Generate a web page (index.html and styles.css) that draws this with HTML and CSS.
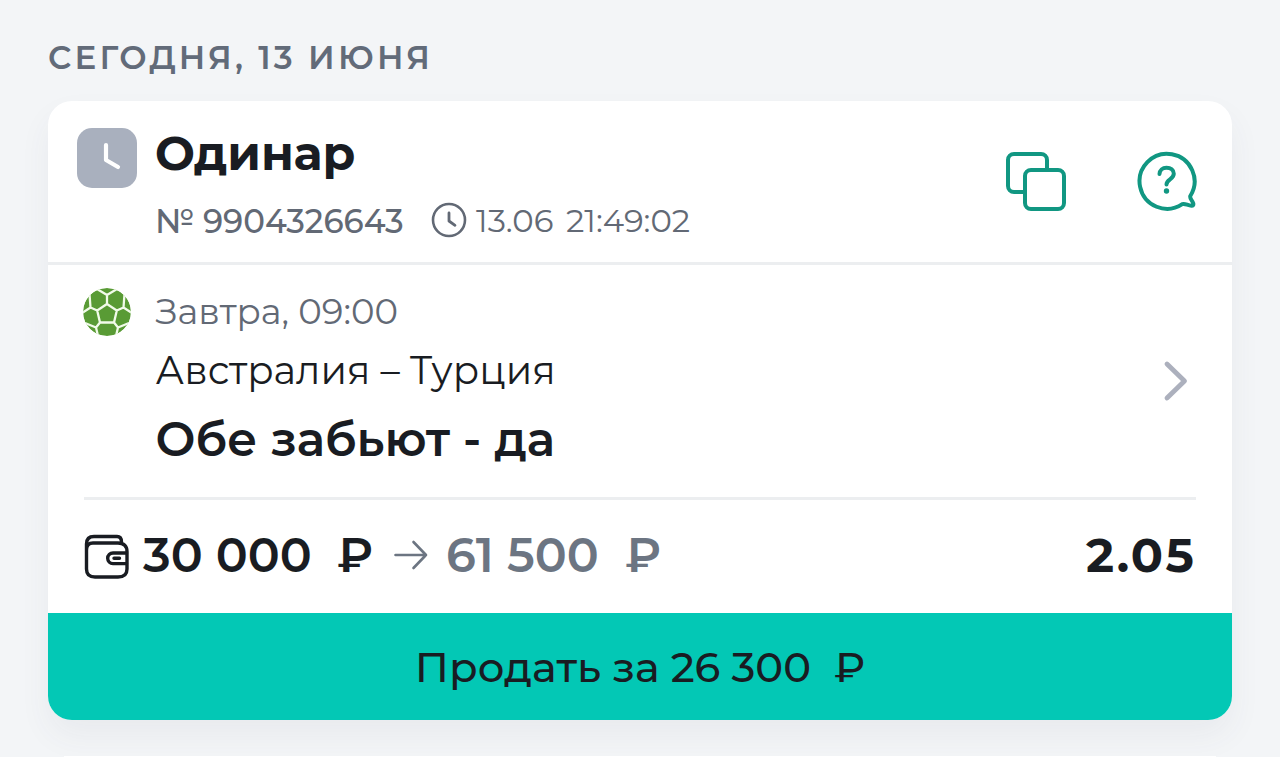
FILE: index.html
```html
<!DOCTYPE html>
<html lang="ru">
<head>
  <meta charset="UTF-8">
  <meta name="viewport" content="width=device-width, initial-scale=1.0">
  <title>История ставок</title>
  <link rel="stylesheet" href="styles.css">
</head>
<body>
  <h2 class="day-title">СЕГОДНЯ, 13 ИЮНЯ</h2>

  <div class="card">
    <div class="card-header">
      <div class="status-icon">
        <svg width="60" height="60" viewBox="0 0 60 60" fill="none" stroke="#fff" stroke-width="4.2" stroke-linecap="round" stroke-linejoin="round">
          <path d="M29 17v15l12 7"/>
        </svg>
      </div>
      <div class="header-info">
        <h1 class="bet-type">Одинар</h1>
        <div class="bet-meta">
          <span class="bet-number">№ 9904326643</span>
          <svg class="clock" width="36" height="36" viewBox="0 0 36 36" fill="none" stroke="#626975" stroke-width="2.6" stroke-linecap="round" stroke-linejoin="round">
            <circle cx="18" cy="18" r="16"/>
            <path d="M18 11v8l6 4.3" stroke-width="2.8"/>
          </svg>
          <span class="bet-date">13.06</span>
          <span class="bet-time">21:49:02</span>
        </div>
      </div>
      <div class="actions">
        <svg width="62" height="62" viewBox="0 0 62 62" fill="none" stroke="#119782" stroke-width="4" stroke-linejoin="round">
          <path d="M18 41H9a6 6 0 0 1-6-6V9a6 6 0 0 1 6-6h27a6 6 0 0 1 6 6v9"/>
          <rect x="20" y="19" width="39" height="39" rx="6"/>
        </svg>
        <svg width="62" height="62" viewBox="0 0 62 62" fill="none" stroke="#119782" stroke-width="4" stroke-linecap="round" stroke-linejoin="round">
          <path d="M54.3 45A27.5 27.5 0 1 0 46.3 53.2C49 52.1 51.5 54.5 55.5 54.8Q57.7 54.9 57.3 52.5C56.7 49.7 53.4 47.7 54.3 45Z"/>
          <path d="M23.5 23C23.7 19 26.5 16.8 30.5 16.8c4.300 0 7.300 2.300 7.300 6 0 5.400-7.300 5.600-7.300 10.600"/>
          <circle cx="30.5" cy="40" r="2.7" fill="#119782" stroke="none"/>
        </svg>
      </div>
    </div>

    <div class="event">
      <svg class="ball" width="48" height="48" viewBox="0 0 48 48">
        <defs><clipPath id="ball"><circle cx="24" cy="24" r="24"/></clipPath></defs>
        <g clip-path="url(#ball)">
          <circle cx="24" cy="24" r="24" fill="#599b35"/>
          <path d="M24 16 33.8 22.5 31 34.500H17L14.2 22.5ZM24 16V7M33.8 22.5 40.5 19.500M31 34.500l4 5M17 34.500l-4 5M14.2 22.5 7.5 19.500M24 7 14 1M24 7 34 1M40.5 19.500 41.5 6M40.5 19.500 49 25M7.5 19.500 6.5 6M7.5 19.500-1 25M35 39.500 46 35M35 39.500 33 48M13 39.500 2 35M13 39.500 15 48" fill="none" stroke="#f1fbe9" stroke-width="2.3"/>
        </g>
      </svg>
      <div class="event-info">
        <div class="event-time">Завтра, 09:00</div>
        <div class="event-teams">Австралия – Турция</div>
        <div class="event-outcome">Обе забьют - да</div>
      </div>
      <svg class="chevron" width="26" height="42" viewBox="0 0 26 42" fill="none" stroke="#acb0bd" stroke-width="4.8" stroke-linecap="round" stroke-linejoin="round">
        <path d="M4 4 21.5 21 4 38"/>
      </svg>
    </div>

    <div class="totals">
      <svg class="wallet" width="46" height="46" viewBox="0 0 46 46" fill="none" stroke="#191c22" stroke-width="3.4" stroke-linecap="round" stroke-linejoin="round">
        <path d="M2.5 14V35Q2.5 43 11 43H34Q43 43 43 35V17.5Q43 9 34 9H9Q2.5 9 2.5 16M2.5 14V10Q2.5 2.5 10 2.5H33Q37.5 2.5 37.5 8"/>
        <path d="M42.5 19H29a5.300 5.300 0 0 0 0 10.600h13.500M30 24.300h5.500"/>
      </svg>
      <span class="stake">30 000</span>
      <span class="stake-ruble">₽</span>
      <svg class="arrow" width="34" height="30" viewBox="0 0 34 30" fill="none" stroke="#6c7582" stroke-width="2.6" stroke-linecap="round" stroke-linejoin="round">
        <path d="M1.5 15H32M19.5 2 32 15 19.5 28"/>
      </svg>
      <span class="payout">61 500</span>
      <span class="payout-ruble">₽</span>
      <span class="odds">2.05</span>
    </div>

    <button class="sell-button"><span>Продать за 26 300</span><span>₽</span></button>
  </div>

  <div class="next-card"></div>
</body>
</html>
```

FILE: styles.css
```css
* {
  margin: 0;
  padding: 0;
  box-sizing: border-box;
}

body {
  height: 757px;
  padding: 37px 48px 0;
  overflow: hidden;
  background: #f3f5f7;
  color: #191c22;
  font-family: 'Montserrat', 'Inter', sans-serif;
  white-space: nowrap;
}

svg {
  display: block;
  flex-shrink: 0;
}

.day-title {
  height: 64px;
  line-height: 41px;
  font-size: 32.4px;
  font-weight: 600;
  letter-spacing: 3.25px;
  color: #626b79;
}

.card {
  background: #fff;
  border-radius: 24px;
  box-shadow: 0 16px 32px rgba(60, 60, 110, 0.06);
  overflow: hidden;
}

.card-header {
  display: flex;
  height: 164px;
  padding: 27px 34px 0 29px;
  border-bottom: 3px solid #eceef0;
}

.status-icon {
  width: 60px;
  height: 60px;
  border-radius: 15px;
  background: #a9b0be;
}

.header-info {
  flex: 1;
  padding-left: 18px;
}

.bet-type {
  height: 75px;
  line-height: 51px;
  font-size: 47.4px;
  font-weight: 700;
}

.bet-meta {
  display: flex;
  align-items: center;
  height: 36px;
  font-size: 32.6px;
  color: #626975;
}

.bet-number {
  width: 276px;
  font-weight: 500;
}

.clock {
  margin-top: -2px;
}

.bet-date {
  width: 99px;
  padding-left: 9px;
}

.bet-date,
.bet-time {
  margin-top: -1px;
  font-size: 32.3px;
}

.actions {
  display: flex;
  gap: 69px;
  padding-top: 23px;
}

.event {
  display: flex;
  height: 232px;
  padding: 23px 43px 0 35px;
}

.event-info {
  flex: 1;
  padding-left: 24.5px;
}

.event-time {
  height: 59px;
  line-height: 48px;
  font-size: 35.5px;
  color: #626975;
}

.event-teams {
  height: 68px;
  line-height: 48px;
  font-size: 38.6px;
}

.event-outcome {
  line-height: 49px;
  font-size: 47.4px;
  font-weight: 600;
}

.chevron {
  margin-top: 72px;
}

.totals {
  display: flex;
  align-items: center;
  height: 116px;
  margin: 0 36px;
  padding-bottom: 3px;
  border-top: 3px solid #eceef0;
  font-size: 47.5px;
  font-weight: 600;
}

.wallet {
  margin-top: 3px;
}

.stake {
  width: 207px;
  padding-left: 13px;
}

.stake-ruble {
  width: 57px;
}

.payout {
  width: 179px;
  margin-left: 18px;
}

.payout,
.payout-ruble {
  color: #6c7582;
}

.odds {
  margin-left: auto;
  font-weight: 700;
  letter-spacing: 2.3px;
}

.sell-button {
  display: flex;
  align-items: center;
  justify-content: center;
  gap: 23px;
  width: 100%;
  height: 107px;
  border: none;
  background: #03c8b5;
  color: #191c22;
  font-family: inherit;
  font-size: 41.7px;
  font-weight: 500;
}

.next-card {
  height: 1px;
  margin: 36px 16px 0;
  background: #fff;
}
```
